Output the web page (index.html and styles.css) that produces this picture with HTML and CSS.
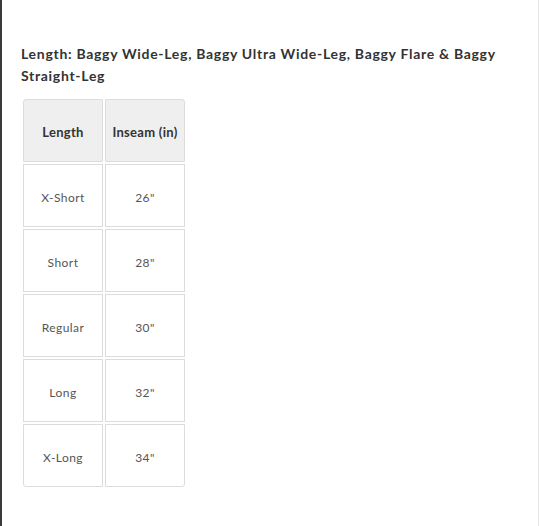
FILE: index.html
```html
<!DOCTYPE html>
<html>
<head>
<meta charset="utf-8">
<link rel="stylesheet" href="styles.css">
</head>
<body>
<div class="frame">
  <div class="content">
    <h3 class="title">Length: Baggy Wide-Leg, Baggy Ultra Wide-Leg, Baggy Flare &amp; Baggy Straight-Leg</h3>
    <table class="size-table">
      <thead>
        <tr><th>Length</th><th>Inseam (in)</th></tr>
      </thead>
      <tbody>
        <tr><td>X-Short</td><td>26"</td></tr>
        <tr><td>Short</td><td>28"</td></tr>
        <tr><td>Regular</td><td>30"</td></tr>
        <tr><td>Long</td><td>32"</td></tr>
        <tr><td>X-Long</td><td>34"</td></tr>
      </tbody>
    </table>
  </div>
</div>
</body>
</html>
```
FILE: styles.css
```css
html, body {
  margin: 0;
  padding: 0;
  background: #ffffff;
}
body {
  font-family: Lato, "Open Sans", sans-serif;
  width: 541px;
  height: 526px;
  overflow: hidden;
}
.frame {
  height: 526px;
  box-sizing: border-box;
  border-left: 2px solid #3a3a3a;
  border-right: 1px solid #e6e6e6;
  width: 539px;
}
.content {
  padding: 43px 20px 0 19px;
}
.title {
  margin: 0 0 10px 0;
  font-size: 14px;
  line-height: 22px;
  font-weight: 700;
  letter-spacing: 0.7px;
  color: #333333;
}
.size-table {
  border-collapse: separate;
  border-spacing: 2px;
  margin: 0;
}
.size-table th,
.size-table td {
  width: 80px;
  height: 63px;
  box-sizing: border-box;
  padding: 3px 0 0 0;
  border: 1px solid #dcdcdc;
  text-align: center;
  vertical-align: middle;
}
.size-table th {
  background: #efefef;
  font-size: 13px;
  font-weight: 700;
  letter-spacing: 0.3px;
  color: #333333;
}
.size-table td {
  font-size: 12px;
  letter-spacing: 0.45px;
  color: #555555;
  font-weight: 400;
}
.size-table thead th:first-child { border-top-left-radius: 3px; }
.size-table thead th:last-child { border-top-right-radius: 3px; }
.size-table tbody tr:last-child td:first-child { border-bottom-left-radius: 3px; }
.size-table tbody tr:last-child td:last-child { border-bottom-right-radius: 3px; }
```
